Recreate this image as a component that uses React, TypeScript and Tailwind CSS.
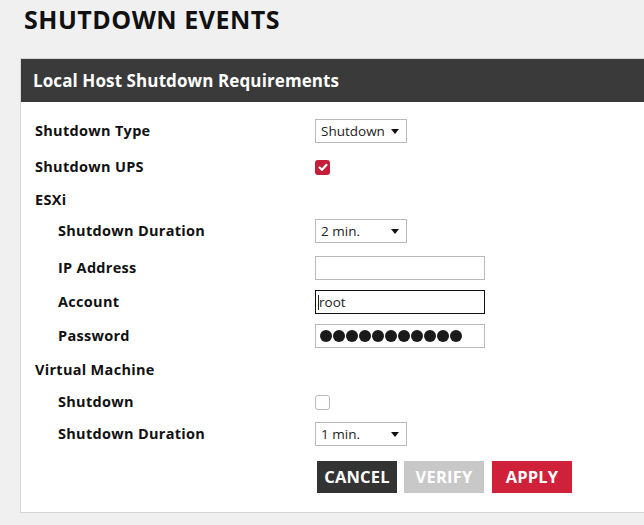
import React from "react";

const font = { fontFamily: '"Open Sans", "Liberation Sans", sans-serif' };

function Caret() {
  return (
    <svg width="8" height="5" viewBox="0 0 8 5" className="shrink-0">
      <path d="M0 0 L8 0 L4 5 Z" fill="#111" />
    </svg>
  );
}

function Select({ value }: { value: string }) {
  return (
    <div className="flex h-[24px] w-[92px] items-center justify-between border border-[#b9b9b9] bg-white pl-[5px] pr-[7px] text-[13.5px] text-[#222]">
      <span>{value}</span>
      <Caret />
    </div>
  );
}

function Row({ label, indent, children, h }: { label: string; indent?: boolean; children?: React.ReactNode; h: string }) {
  return (
    <div className={`flex items-center ${h}`}>
      <div className={`w-[280px] shrink-0 text-[14.5px] font-bold tracking-[0.3px] text-[#111] ${indent ? "pl-[23px]" : ""}`}>{label}</div>
      <div className="flex items-center">{children}</div>
    </div>
  );
}

export default function App() {
  return (
    <div className="min-h-[525px] w-[644px] overflow-hidden bg-[#f0f0f0]" style={font}>
      <div className="pl-[24px] pt-[4px] text-[25px] font-bold leading-[30px] tracking-[0.5px] text-[#111]">SHUTDOWN EVENTS</div>
      <div className="ml-[20px] mt-[24px] w-[640px] border border-[#d6d6d6] bg-white">
        <div className="flex h-[43px] items-center bg-[#3a3a3a] pl-[12px] text-[17px] font-bold tracking-[0.1px] text-white">
          Local Host Shutdown Requirements
        </div>
        <div className="pl-[14px] pt-[16px] pb-[19px]">
          <Row label="Shutdown Type" h="h-[26px]">
            <Select value="Shutdown" />
          </Row>
          <div className="h-[13px]" />
          <Row label="Shutdown UPS" h="h-[20px]">
            <div className="flex h-[15px] w-[15px] items-center justify-center rounded-[3px] bg-[#c41e3a]">
              <svg width="10" height="8" viewBox="0 0 10 8">
                <path d="M1 4 L4 6.8 L9 1.2" stroke="white" strokeWidth="2.2" fill="none" />
              </svg>
            </div>
          </Row>
          <div className="h-[13px]" />
          <Row label="ESXi" h="h-[20px]" />
          <div className="h-[8px]" />
          <Row label="Shutdown Duration" indent h="h-[26px]">
            <Select value="2 min." />
          </Row>
          <div className="h-[11px]" />
          <Row label="IP Address" indent h="h-[26px]">
            <div className="h-[24px] w-[170px] border border-[#b9b9b9] bg-white" />
          </Row>
          <div className="h-[8px]" />
          <Row label="Account" indent h="h-[26px]">
            <div className="flex h-[24px] w-[170px] items-center border border-[#111] bg-white pl-[2px] text-[13.5px] text-[#222]">
              <span className="inline-block h-[15px] w-[1px] bg-[#222]" />
              root
            </div>
          </Row>
          <div className="h-[8px]" />
          <Row label="Password" indent h="h-[26px]">
            <div className="flex h-[24px] w-[170px] items-center gap-[1px] border border-[#b9b9b9] bg-white pl-[4px]">
              {Array.from({ length: 11 }).map((_, i) => (
                <span key={i} className="inline-block h-[12px] w-[12px] rounded-full bg-[#1a1a1a]" />
              ))}
            </div>
          </Row>
          <div className="h-[11px]" />
          <Row label="Virtual Machine" h="h-[20px]" />
          <div className="h-[12px]" />
          <Row label="Shutdown" indent h="h-[20px]">
            <div className="h-[15px] w-[15px] rounded-[3px] border border-[#b9b9b9] bg-white" />
          </Row>
          <div className="h-[9px]" />
          <Row label="Shutdown Duration" indent h="h-[26px]">
            <Select value="1 min." />
          </Row>
          <div className="h-[14px]" />
          <div className="flex gap-[7px] pl-[282px] text-[16.5px] font-bold tracking-[0.2px]">
            <div className="flex h-[32px] w-[80px] items-center justify-center bg-[#333333] text-white">CANCEL</div>
            <div className="flex h-[32px] w-[80px] items-center justify-center bg-[#c8c8c8] text-white">VERIFY</div>
            <div className="ml-[1px] flex h-[32px] w-[80px] items-center justify-center bg-[#d0213a] text-white">APPLY</div>
          </div>
        </div>
      </div>
    </div>
  );
}
